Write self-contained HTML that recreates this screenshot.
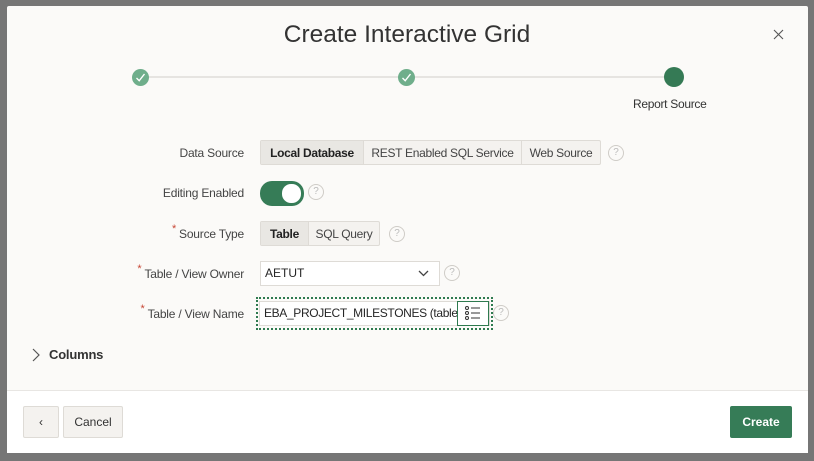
<!DOCTYPE html>
<html><head><style>
*{box-sizing:border-box;margin:0;padding:0}
body{width:814px;height:461px;background:#767676;position:relative;overflow:hidden;font-family:"Liberation Sans",sans-serif;color:#262626}
.dlg{position:absolute;left:7px;top:6px;width:801px;height:447px;background:#fbfaf8;border-radius:2px}
.a{position:absolute}
.title{left:0;width:814px;top:21px;text-align:center;font-size:24.5px;color:#333}
.line{top:76px;left:140px;width:534px;height:2px;background:#e6e4e1}
.dot{width:17px;height:17px;border-radius:50%;background:#6fae8b;top:69px}
.dot svg{position:absolute;left:3px;top:3px}
.big{width:20px;height:20px;background:#357a55;top:67px;left:664px}
.step{left:633px;top:97px;font-size:12px;color:#333;letter-spacing:-.3px}
.lbl{right:570px;font-size:12px;color:#444;white-space:nowrap;letter-spacing:-.2px}
.req{color:#c74634;font-size:11px;position:relative;top:-6px;margin-right:3px}
.seg{display:flex;border:1px solid #dedbd6;border-radius:2px;height:25px;background:#f4f2ef}
.seg div{line-height:24px;font-size:12px;color:#444;border-left:1px solid #dedbd6;text-align:center;letter-spacing:-.3px;white-space:nowrap}
.seg div:first-child{border-left:none}
.seg .on{background:#e9e7e3;color:#222;font-weight:bold}
.help{width:16px;height:16px;border:1.3px solid #cfccc7;border-radius:50%;font-size:10px;color:#bbb;text-align:center;line-height:14px}
.tog{left:260px;top:181px;width:44px;height:25px;border-radius:12px;background:#367c57}
.tog div{position:absolute;right:3px;top:3px;width:19px;height:19px;border-radius:9px;background:#fff}
.sel{left:260px;top:261px;width:180px;height:25px;background:#fff;border:1px solid #dedbd6;font-size:12px;line-height:23px;padding-left:4px}
.pop{left:256px;top:297px;width:237px;height:33px;border:2px dotted #2e7a4f}
.inp{position:absolute;left:1px;top:2px;width:231px;height:25px;background:#fff;border:1px solid #dedbd6;font-size:12px;line-height:23px;padding-left:4px;overflow:hidden;white-space:nowrap;letter-spacing:-.35px}
.lb{position:absolute;left:199px;top:2px;width:32px;height:25px;border:1.5px solid #2e7a4f;background:#fff}
.cols{left:49px;top:347px;font-size:13px;color:#333;font-weight:bold;letter-spacing:-.2px}
.foot{left:7px;top:390px;width:801px;height:63px;background:#fff;border-top:1px solid #e8e6e3}
.btn{top:406px;height:32px;border:1px solid #dedbd6;background:#f4f2ef;border-radius:2px;font-size:12px;line-height:30px;text-align:center;color:#333}
.create{left:730px;top:406px;width:62px;height:32px;background:#367c57;color:#fff;font-weight:bold;font-size:12px;line-height:32px;text-align:center;border-radius:2px}
</style></head><body>
<div class="dlg"></div>
<div class="a title">Create Interactive Grid</div>
<svg class="a" style="left:773px;top:29px" width="11" height="11" viewBox="0 0 11 11"><path d="M1 1L10 10M10 1L1 10" stroke="#555" stroke-width="1.1"/></svg>
<div class="a line"></div>
<div class="a dot" style="left:132px"><svg width="11" height="11" viewBox="0 0 11 11"><path d="M1.5 6 L4.2 8.7 L9.5 2" stroke="#fff" stroke-width="1.4" fill="none"/></svg></div>
<div class="a dot" style="left:398px"><svg width="11" height="11" viewBox="0 0 11 11"><path d="M1.5 6 L4.2 8.7 L9.5 2" stroke="#fff" stroke-width="1.4" fill="none"/></svg></div>
<div class="a dot big"></div>
<div class="a step">Report Source</div>

<div class="a lbl" style="top:146px">Data Source</div>
<div class="a seg" style="left:260px;top:140px"><div class="on" style="width:102px">Local Database</div><div style="width:158px">REST Enabled SQL Service</div><div style="width:79px">Web Source</div></div>
<div class="a help" style="left:608px;top:145px">?</div>

<div class="a lbl" style="top:186px">Editing Enabled</div>
<div class="a tog"><div></div></div>
<div class="a help" style="left:308px;top:184px">?</div>

<div class="a lbl" style="top:227px"><span class="req">*</span>Source Type</div>
<div class="a seg" style="left:260px;top:221px"><div class="on" style="width:47px">Table</div><div style="width:71px">SQL Query</div></div>
<div class="a help" style="left:389px;top:226px">?</div>

<div class="a lbl" style="top:267px"><span class="req">*</span>Table / View Owner</div>
<div class="a sel">AETUT<svg style="position:absolute;right:10px;top:8px" width="11" height="7" viewBox="0 0 11 7"><path d="M1 1 L5.5 5.5 L10 1" stroke="#444" stroke-width="1.3" fill="none"/></svg></div>
<div class="a help" style="left:444px;top:265px">?</div>

<div class="a lbl" style="top:307px"><span class="req">*</span>Table / View Name</div>
<div class="a pop"><div class="inp">EBA_PROJECT_MILESTONES (table)</div>
<div class="lb"><svg width="29" height="22" viewBox="0 0 29 22"><g stroke="#333" stroke-width="1" fill="none"><circle cx="9" cy="6" r="1.5"/><circle cx="9" cy="11" r="1.5"/><circle cx="9" cy="16" r="1.5"/><path d="M13 6h9M13 11h9M13 16h9"/></g></svg></div></div>
<div class="a help" style="left:493px;top:305px">?</div>

<svg class="a" style="left:31px;top:348px" width="10" height="14" viewBox="0 0 10 14"><path d="M2 1 L8 7 L2 13" stroke="#555" stroke-width="1.2" fill="none"/></svg>
<div class="a cols">Columns</div>

<div class="a foot"></div>
<div class="a btn" style="left:23px;width:36px">‹</div>
<div class="a btn" style="left:63px;width:60px">Cancel</div>
<div class="a create">Create</div>
</body></html>
